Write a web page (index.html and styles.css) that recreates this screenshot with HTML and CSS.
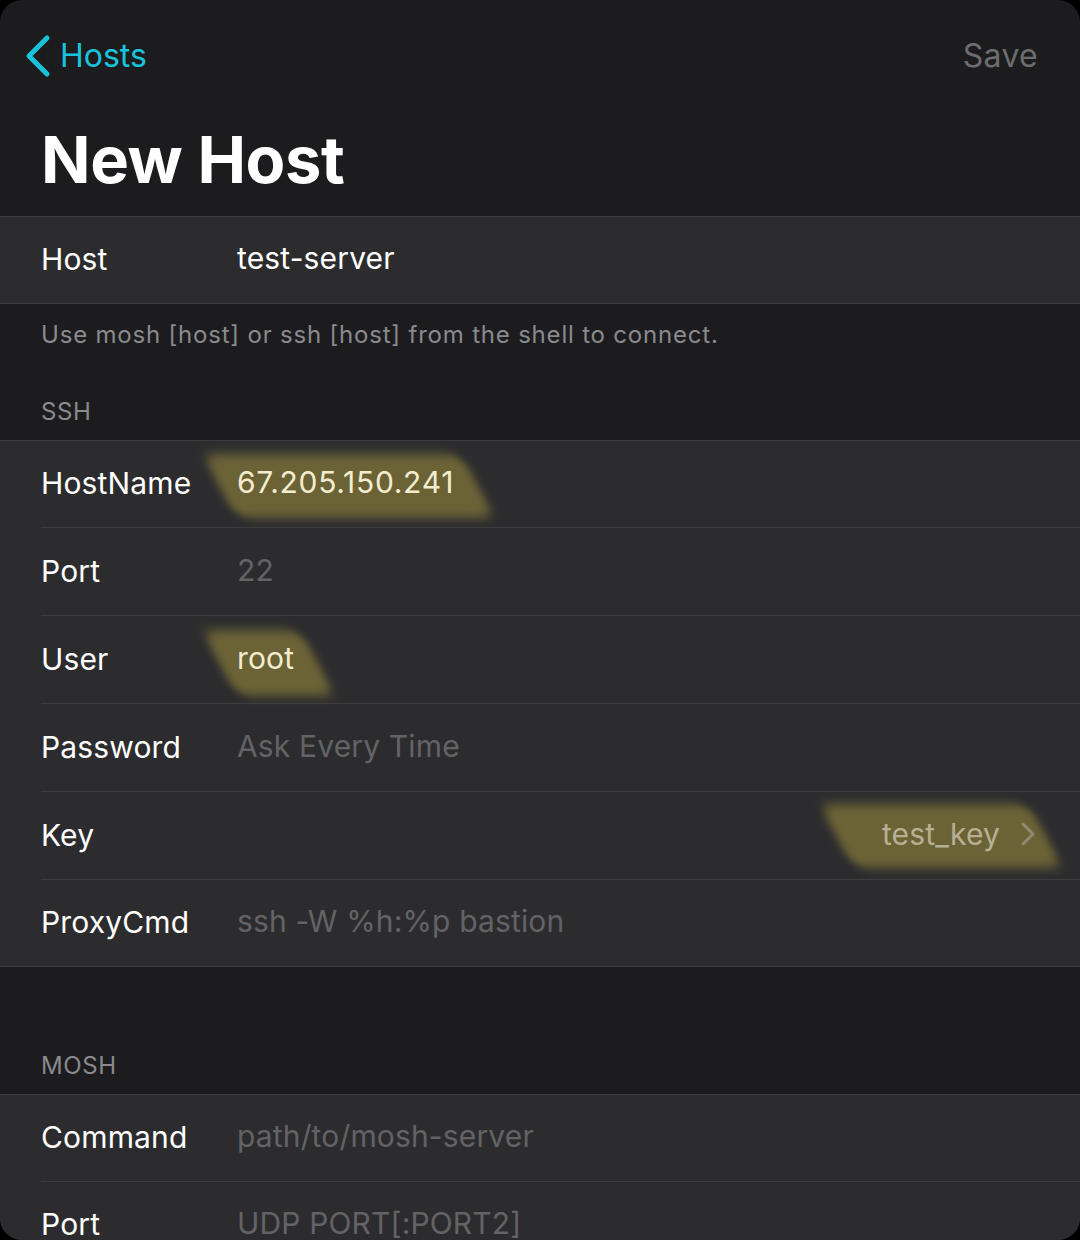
FILE: index.html
```html
<!DOCTYPE html>
<html lang="en">
<head>
<meta charset="utf-8">
<title>New Host</title>
<link rel="stylesheet" href="styles.css">
</head>
<body>
<div class="sheet">
  <header class="nav">
    <a class="back">
      <svg class="back-icon" width="28" height="44" viewBox="0 0 28 44" aria-hidden="true">
        <polyline points="23,4 5,22 23,40" fill="none" stroke="#19c3dc" stroke-width="5" stroke-linecap="round" stroke-linejoin="round"/>
      </svg>
      <span>Hosts</span>
    </a>
    <span class="save">Save</span>
  </header>
  <h1 class="title">New Host</h1>

  <div class="group">
    <div class="row">
      <span class="label">Host</span>
      <span class="value">test-server</span>
    </div>
  </div>
  <p class="footer">Use mosh [host] or ssh [host] from the shell to connect.</p>

  <h2 class="section-header ssh">SSH</h2>
  <div class="group">
    <div class="row first">
      <span class="label">HostName</span>
      <span class="value"><span class="mark mark-ip">67.205.150.241</span></span>
    </div>
    <div class="row">
      <span class="label">Port</span>
      <span class="value placeholder">22</span>
    </div>
    <div class="row">
      <span class="label">User</span>
      <span class="value"><span class="mark mark-user">root</span></span>
    </div>
    <div class="row">
      <span class="label">Password</span>
      <span class="value placeholder">Ask Every Time</span>
    </div>
    <div class="row">
      <span class="label">Key</span>
      <span class="value right"><span class="mark mark-key">test_key
        <svg class="chev" width="16" height="24" viewBox="0 0 16 24" aria-hidden="true">
          <polyline points="3,2 13,12 3,22" fill="none" stroke="currentColor" stroke-width="3" stroke-linecap="round" stroke-linejoin="round"/>
        </svg></span></span>
    </div>
    <div class="row">
      <span class="label">ProxyCmd</span>
      <span class="value placeholder">ssh -W %h:%p bastion</span>
    </div>
  </div>

  <h2 class="section-header mosh">MOSH</h2>
  <div class="group">
    <div class="row first">
      <span class="label">Command</span>
      <span class="value placeholder">path/to/mosh-server</span>
    </div>
    <div class="row">
      <span class="label">Port</span>
      <span class="value placeholder">UDP PORT[:PORT2]</span>
    </div>
  </div>
</div>
</body>
</html>
```

FILE: styles.css
```css
* { box-sizing: border-box; }

html, body {
  margin: 0;
  padding: 0;
  background: #000;
}

body {
  font-family: Inter, "Noto Sans", "Liberation Sans", sans-serif;
  color: #fff;
  -webkit-font-smoothing: antialiased;
}

.sheet {
  width: 1080px;
  height: 1240px;
  background: #1c1c1e;
  border-radius: 22px;
  overflow: hidden;
}

.nav {
  height: 112px;
  display: flex;
  align-items: center;
  justify-content: space-between;
  padding: 0 42px 0 24px;
}

.back {
  display: flex;
  align-items: center;
  gap: 8px;
  color: #19c3dc;
  font-size: 32px;
  line-height: 44px;
}

.back-icon { display: block; }

.save {
  color: #6d6d70;
  font-size: 32px;
  line-height: 44px;
  letter-spacing: 0.3px;
}

.title {
  margin: 0;
  padding: 8px 42px 16px 41px;
  font-size: 65px;
  line-height: 80px;
  font-weight: 700;
  letter-spacing: -0.4px;
}

.group {
  background: #2c2c2e;
  border-top: 1px solid #3d3d40;
  border-bottom: 1px solid #3d3d40;
  padding-left: 41px;
}

.row {
  isolation: isolate;
  display: flex;
  align-items: center;
  height: 88px;
  border-bottom: 1px solid #3d3d40;
  font-size: 30px;
  letter-spacing: 0.15px;
}

.row.first { height: 87px; }

.group .row:last-child { border-bottom: none; height: 86px; }

.label {
  width: 196px;
  flex: none;
  color: #fff;
  line-height: 40px;
  margin-top: -2px;
}

.value {
  flex: 1;
  color: #fff;
  line-height: 40px;
  margin-top: -4px;
}

.value.right {
  display: flex;
  justify-content: flex-end;
  padding-right: 44px;
}

.placeholder { color: #636366; }

.footer {
  margin: 0;
  padding: 15px 41px 0;
  font-size: 24px;
  line-height: 32px;
  letter-spacing: 0.8px;
  color: #8a8a8e;
}

.section-header {
  margin: 0;
  padding: 0 41px 12px;
  font-size: 24px;
  line-height: 32px;
  font-weight: 400;
  letter-spacing: 0.6px;
  color: #8a8a8e;
}

.section-header.ssh { padding-top: 45px; }
.section-header.mosh { padding-top: 83px; padding-bottom: 12px; }

/* highlighter marks */
.mark {
  position: relative;
  display: inline-flex;
  align-items: center;
  color: #f3edcf;
}

.mark-ip { letter-spacing: 0.7px; }

.mark::before {
  content: "";
  position: absolute;
  z-index: -1;
  background: #6b6236;
  transform: skewX(28deg);
  border-radius: 14px;
  filter: blur(5px);
}

.mark-ip::before { left: -18px; right: -24px; top: -8px; bottom: -16px; }
.mark-user::before { left: -18px; right: -24px; top: -8px; bottom: -18px; }
.mark-key { color: #b7b093; gap: 20px; }
.mark-key::before { left: -46px; right: -10px; top: -10px; bottom: -14px; }

.chev { display: block; color: #8f8a72; }
```
